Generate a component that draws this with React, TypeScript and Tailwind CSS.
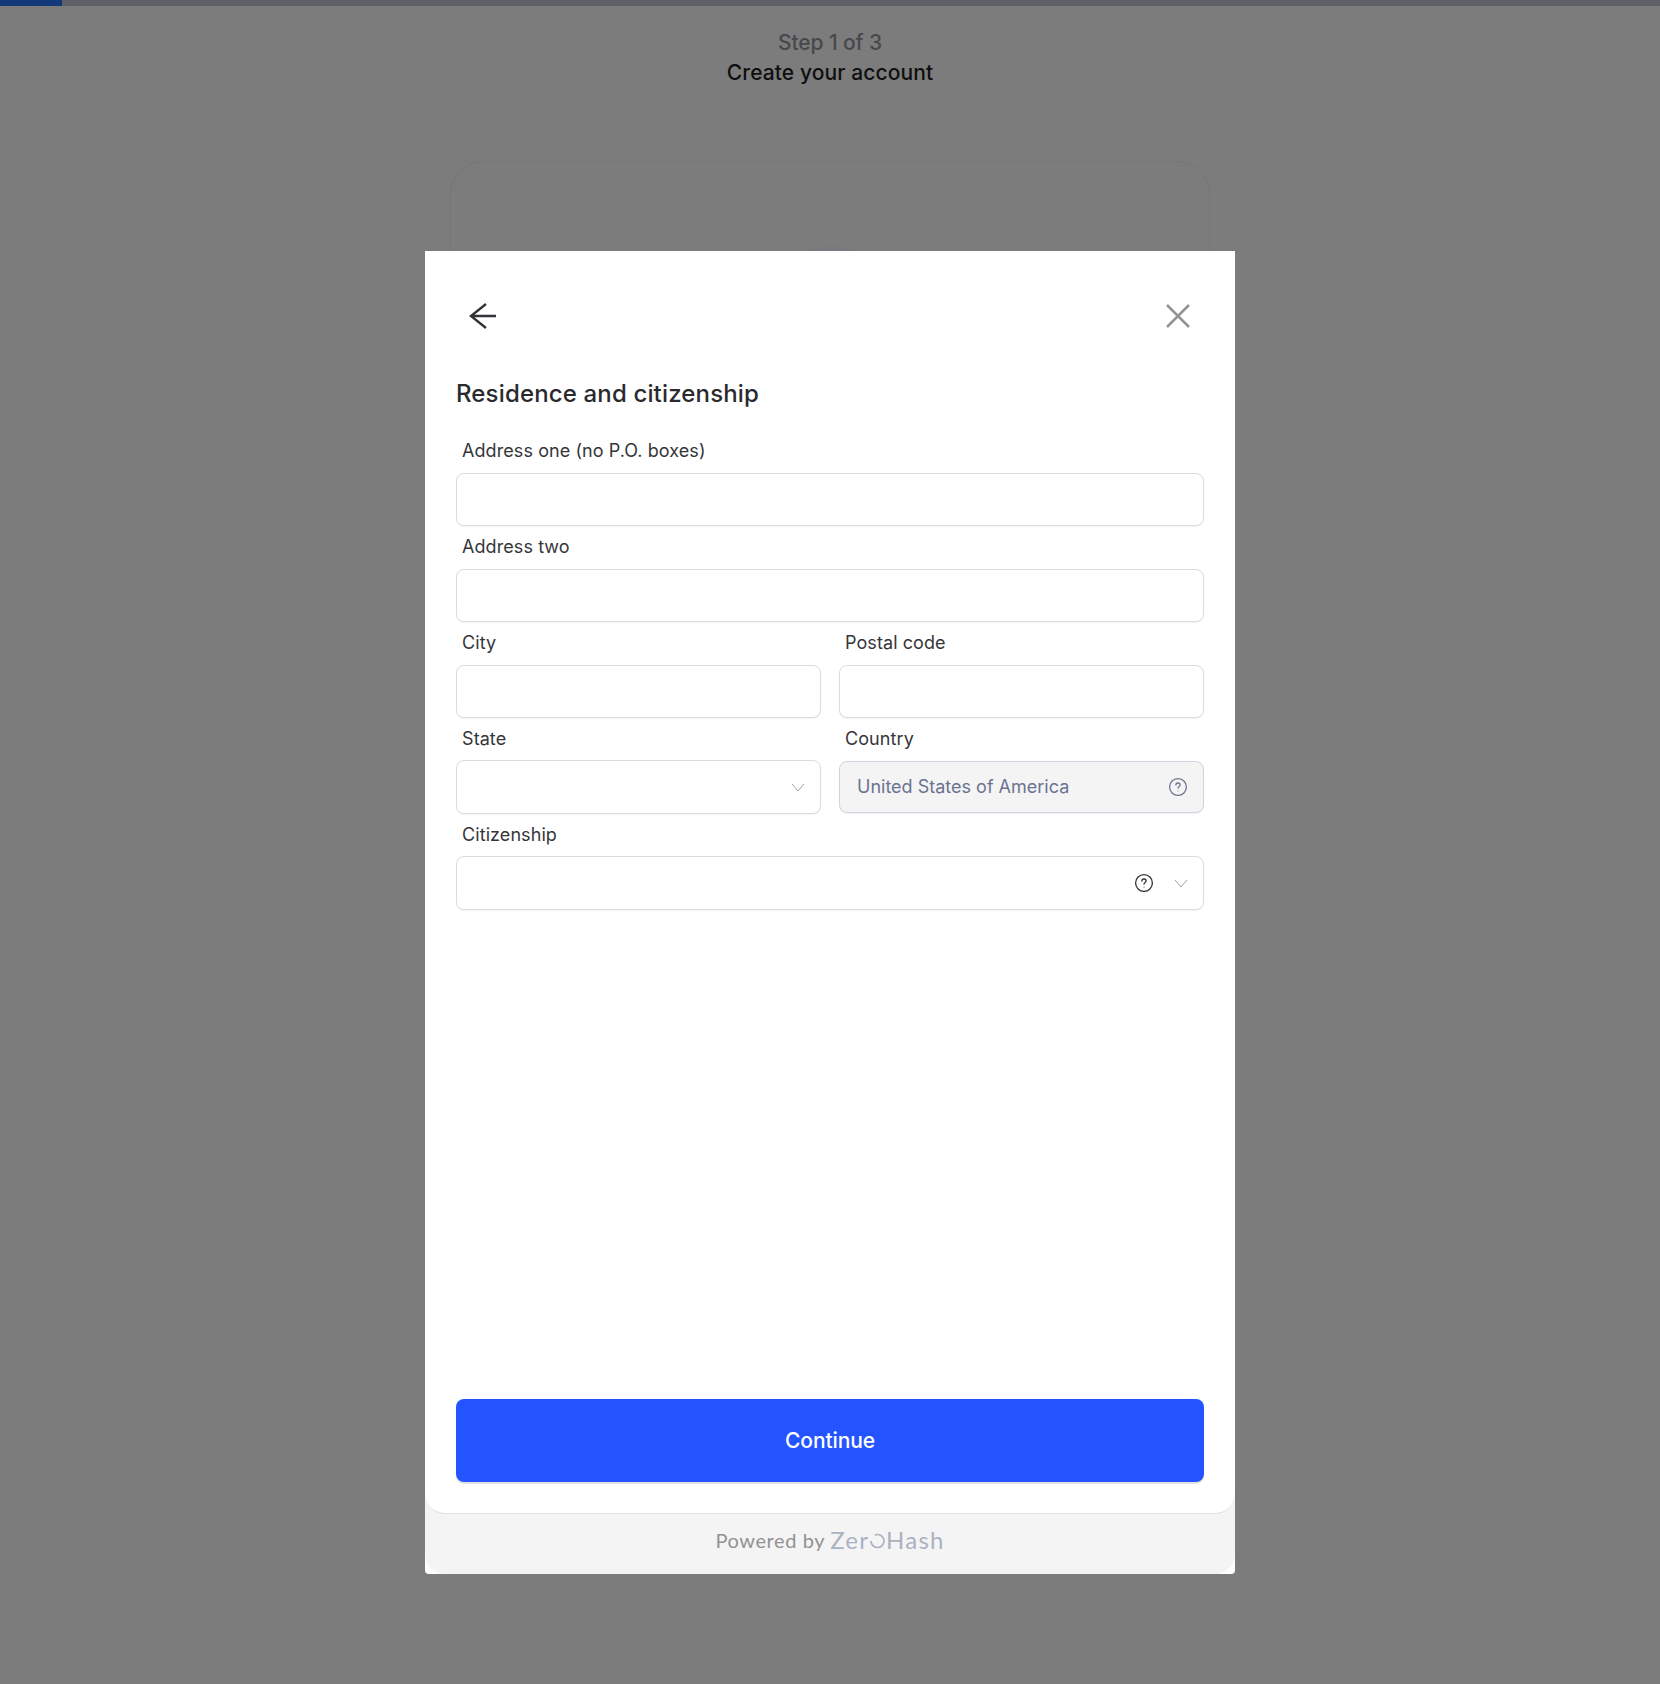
import React from "react";

const Chevron = () => (
  <svg width="14" height="14" viewBox="0 0 14 14" fill="none" stroke="#9ca3af" strokeWidth="1" className="shrink-0">
    <path d="M1 4l6 7 6-7" />
  </svg>
);

const Help = ({ color }: { color: string }) => (
  <svg width="20" height="20" viewBox="0 0 20 20" fill="none" stroke={color} strokeWidth="1.3" className="shrink-0">
    <circle cx="10" cy="10" r="8.4" />
    <path d="M7.9 8c0-1.2 1-2 2.1-2s2.100.8 2.100 1.900c0 1.600-2.100 1.600-2.100 3.200" strokeLinecap="round" />
    <circle cx="10" cy="13.9" r=".5" fill={color} stroke="none" />
  </svg>
);

const Field = ({
  label,
  children,
  boxClass = "h-[53px] bg-white border-[#dcdcdc]",
}: {
  label: string;
  children?: React.ReactNode;
  boxClass?: string;
}) => (
  <div className="flex flex-col min-w-0">
    <label className="h-[43px] pl-[6px] pt-[7px] text-[18px] leading-[27px] tracking-[0.08px] text-[#36363a]">{label}</label>
    <div className={`rounded-[8px] border flex items-center pl-[17px] pr-[15px] shadow-[0_1px_1px_rgba(0,0,0,0.05)] ${boxClass}`}>{children}</div>
  </div>
);

export default function App() {
  return (
    <div className="relative h-[1684px] w-full overflow-hidden bg-[#7c7c7c] font-['Inter',sans-serif]">
      <div className="h-[6px] bg-[#5f6066]">
        <div className="h-full w-[62px] bg-[#123a7a]" />
      </div>
      <div className="flex flex-col items-center pt-[22px]">
        <div className="text-[21px] leading-[30px] font-medium tracking-[-0.1px] text-[#47484c]">Step 1 of 3</div>
        <div className="text-[21px] leading-[30px] font-medium tracking-[0.1px] text-[#0f0f0f]">Create your account</div>
      </div>
      <div className="mx-auto mt-[73px] flex h-[400px] w-[760px] justify-center rounded-[32px] border border-[#767676] pt-[84px]">
        <div className="h-[120px] w-[120px] rounded-full bg-[#787a80]" />
      </div>

      <div className="absolute left-[425px] top-[251px] h-[1323px] w-[810px] rounded-b-[4px] bg-white">
        <div className="flex h-full flex-col rounded-b-[20px] bg-[#f4f4f4]">
          <div className="flex flex-1 flex-col rounded-b-[20px] border-b border-[#e2e2e2] bg-white px-[31px] pb-[31px]">
            <div className="flex h-[78px] items-end justify-between pl-[13px] pr-[13px]">
              <svg width="28" height="28" viewBox="0 0 28 28" fill="none" stroke="#333338" strokeWidth="2.4" className="mb-[-1px]">
                <path d="M27 14H2M17 2 2 14l15 12" />
              </svg>
              <svg width="26" height="26" viewBox="0 0 26 26" fill="none" stroke="#949494" strokeWidth="2.5">
                <path d="M2 2l22 22M24 2 2 24" />
              </svg>
            </div>
            <h1 className="mt-[47px] text-[24px] leading-[36px] font-medium tracking-[0.15px] text-[#2a2a2e]">Residence and citizenship</h1>
            <div className="mt-[18px] flex flex-col gap-0">
              <Field label="Address one (no P.O. boxes)" />
              <Field label="Address two" />
              <div className="grid grid-cols-2 gap-[18px]">
                <Field label="City" />
                <Field label="Postal code" />
              </div>
              <div className="grid grid-cols-2 gap-[18px]">
                <Field label="State" boxClass="h-[54px] -mt-px bg-white border-[#dcdcdc]">
                  <div className="ml-auto"><Chevron /></div>
                </Field>
                <Field label="Country" boxClass="h-[52px] bg-[#f4f4f5] border-[#d2d3de]">
                  <span className="text-[18px] leading-[26px] pb-[1px] text-[#6b7390]">United States of America</span>
                  <div className="ml-auto"><Help color="#6b7390" /></div>
                </Field>
              </div>
              <Field label="Citizenship" boxClass="h-[54px] -mt-px bg-white border-[#dcdcdc]">
                <div className="ml-auto flex items-center gap-[20px]">
                  <Help color="#333338" />
                  <Chevron />
                </div>
              </Field>
            </div>
            <button className="mt-auto h-[83px] rounded-[8px] bg-[#2454ff] pt-[1px] text-[21px] font-medium tracking-[-0.1px] text-white shadow-[0_2px_0_#e2e2e2]">Continue</button>
          </div>
          <div className="flex h-[60px] items-center justify-center gap-[5px] pb-[9px]">
            <span className="text-[20px] tracking-[0.6px] text-[#929292] font-['Lato',sans-serif]">Powered by</span>
            <span className="flex items-center font-['Lato',sans-serif] text-[24px] tracking-[1.2px] text-[#aab2c2]">
              Zer
              <svg width="17" height="16" viewBox="0 0 16 16" fill="none" stroke="#aab2c2" strokeWidth="1.7" className="mt-[3px]">
                <path d="M1.500 8c0 3.500 3 6.500 6.500 6.500s6.500-3 6.500-6.500S11.500 1.500 8 1.500c-1 0-2 .3-2.800.8" />
              </svg>
              Hash
            </span>
          </div>
        </div>
      </div>
    </div>
  );
}
